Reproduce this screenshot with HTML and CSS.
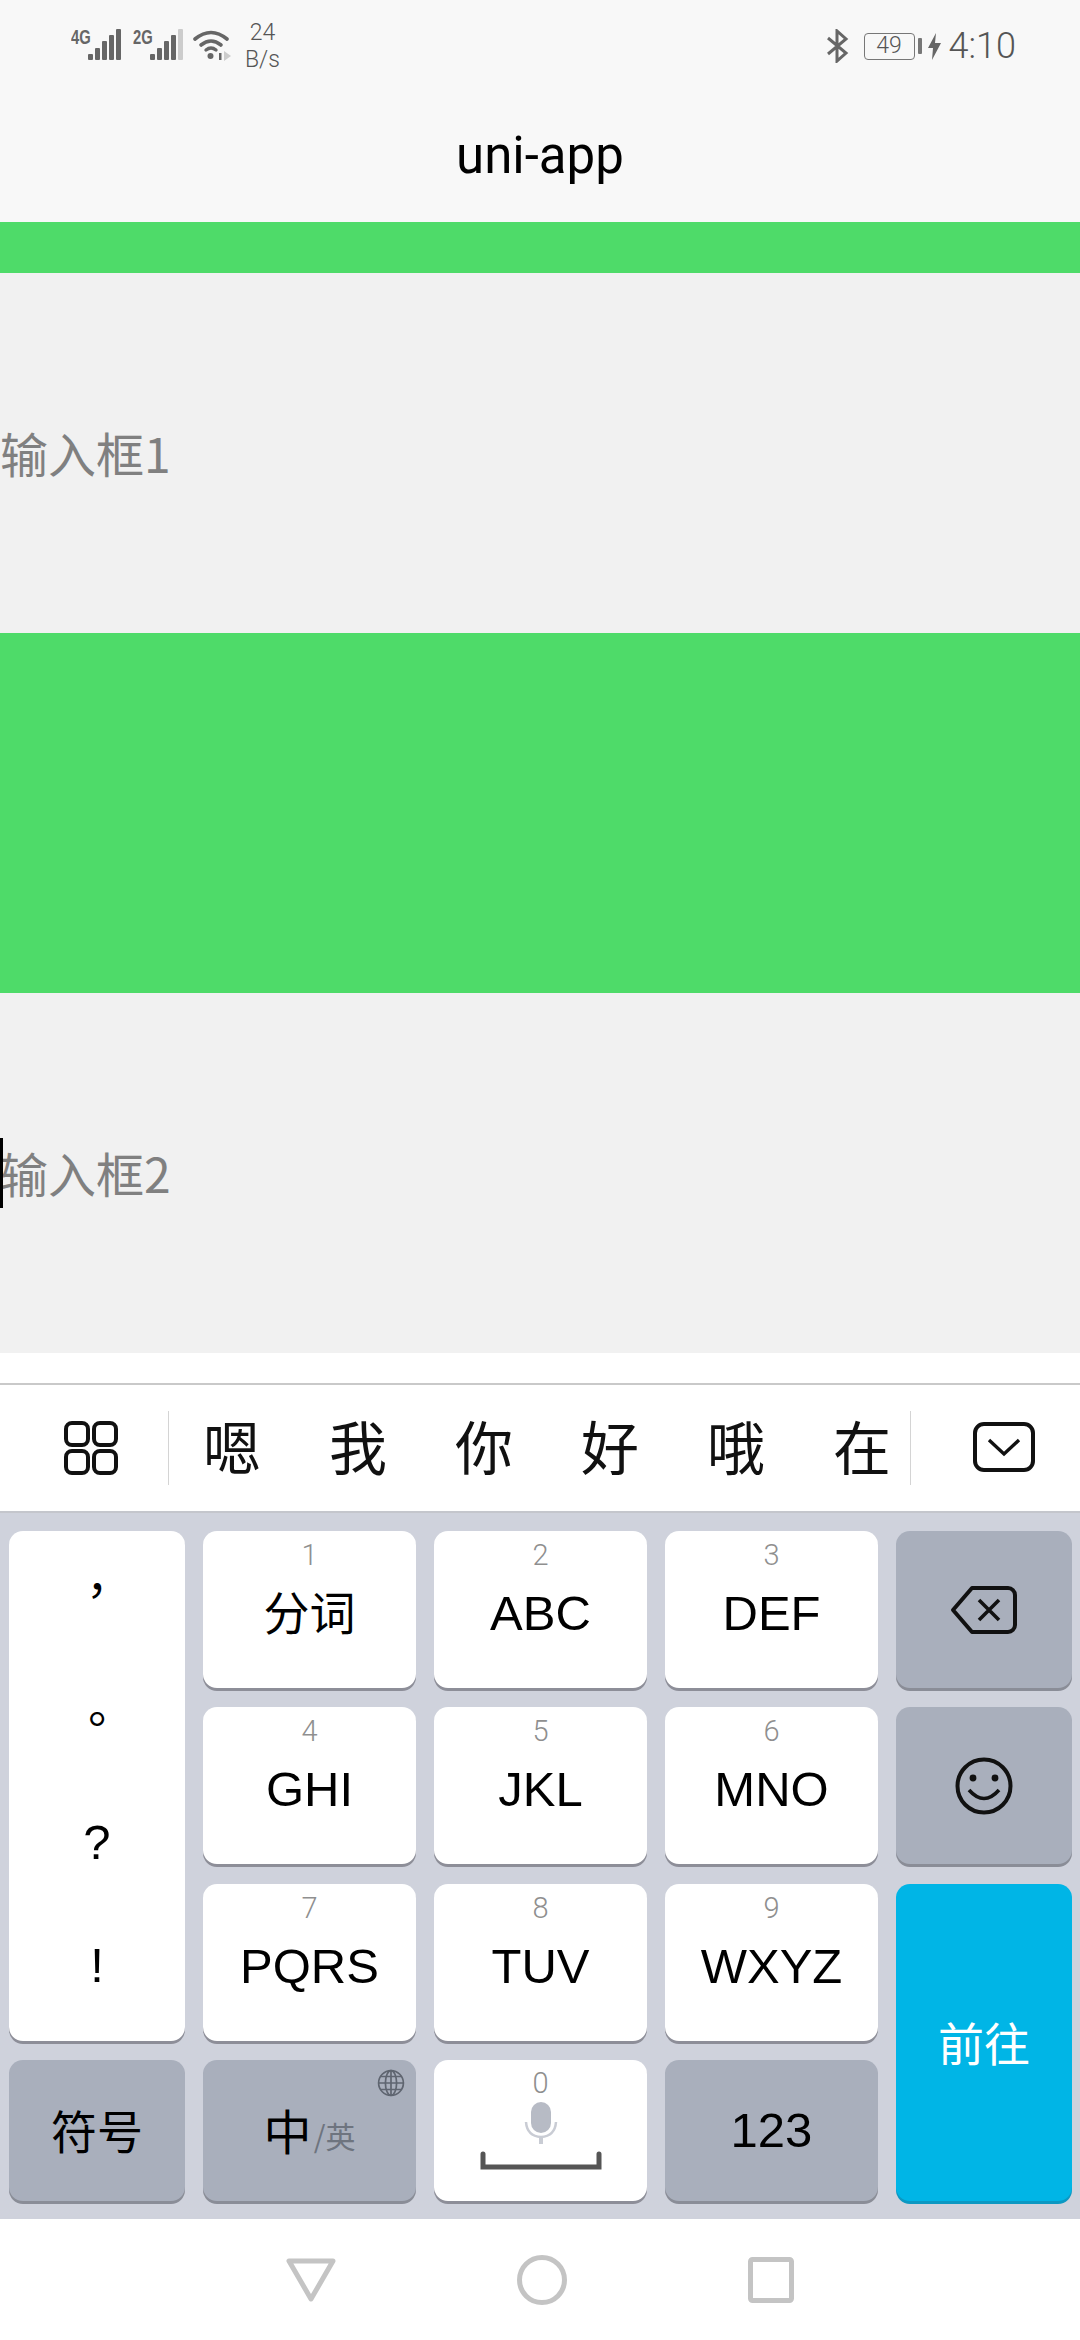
FILE: index.html
```html
<!DOCTYPE html>
<html lang="zh-CN">
<head>
<meta charset="utf-8">
<title>uni-app</title>
<link rel="stylesheet" href="styles.css">
</head>
<body>
<div class="phone">
  <header class="top">
    <div class="status">
      <div class="status-left">
        <span class="net">4G</span>
        <svg class="bars" width="34" height="32" viewBox="0 0 34 32"><g fill="#666"><rect x="0" y="25" width="5" height="6" rx="1"/><rect x="7" y="19" width="5" height="12" rx="1"/><rect x="14" y="12" width="5" height="19" rx="1"/><rect x="21" y="6" width="5" height="25" rx="1"/><rect x="28" y="0" width="5" height="31" rx="1"/></g></svg>
        <span class="net net-two">2G</span>
        <svg class="bars" width="34" height="32" viewBox="0 0 34 32"><g fill="#666"><rect x="0" y="25" width="5" height="6" rx="1"/><rect x="7" y="19" width="5" height="12" rx="1"/><rect x="14" y="12" width="5" height="19" rx="1"/><rect x="21" y="6" width="5" height="25" rx="1"/></g><rect x="28" y="0" width="5" height="31" rx="1" fill="#ccc"/></svg>
        <svg class="wifi" width="38" height="32" viewBox="0 0 38 32"><g fill="none" stroke="#666" stroke-width="3.6" stroke-linecap="round"><path d="M2 10 Q18 -3 34 10"/><path d="M8 16 Q18 8 28 16"/></g><path d="M13 21 Q18 17 23 21" fill="none" stroke="#666" stroke-width="3.4" stroke-linecap="round"/><circle cx="17.5" cy="27" r="3" fill="#666"/><rect x="26" y="24" width="2.5" height="7" fill="#666"/><path d="M31 22 L38 27 L31 32 Z" fill="#ccc"/></svg>
        <div class="speed"><span>24</span><span>B/s</span></div>
      </div>
      <div class="status-right">
        <svg class="bt" width="24" height="34" viewBox="0 0 24 34"><path d="M2 9 L20 24 L11 32 V2 L20 10 L2 25" fill="none" stroke="#666" stroke-width="3"/></svg>
        <div class="battery"><span class="battery-box">49</span><span class="battery-nub"></span></div>
        <svg class="bolt" width="13" height="27" viewBox="0 0 13 27"><path d="M8 0 L0 15 H5 L4 27 L13 10 H7 Z" fill="#666"/></svg>
        <span class="clock">4:10</span>
      </div>
    </div>
    <div class="title">uni-app</div>
  </header>

  <main class="content">
    <div class="green green-thin"></div>
    <div class="field"><span class="placeholder">输入框1</span></div>
    <div class="green green-tall"></div>
    <div class="field field-focused"><span class="caret"></span><span class="placeholder">输入框2</span></div>
    <div class="gap-strip"></div>
  </main>

  <section class="candidates">
    <div class="cand-icon">
      <svg width="54" height="54" viewBox="0 0 54 54"><g fill="none" stroke="#111" stroke-width="4"><rect x="2" y="2" width="22" height="22" rx="6"/><rect x="30" y="2" width="22" height="22" rx="6"/><rect x="2" y="30" width="22" height="22" rx="6"/><rect x="30" y="30" width="22" height="22" rx="6"/></g></svg>
    </div>
    <div class="cand-list">
      <span>嗯</span><span>我</span><span>你</span><span>好</span><span>哦</span><span>在</span>
    </div>
    <div class="cand-close">
      <svg width="62" height="50" viewBox="0 0 62 50"><rect x="2" y="2" width="58" height="46" rx="9" fill="none" stroke="#111" stroke-width="4"/><path d="M16 18 L31 32 L46 18" fill="none" stroke="#111" stroke-width="3.4"/></svg>
    </div>
  </section>

  <section class="keyboard">
    <div class="key key-punct"><span class="pc pc-comma">，</span><span class="pc">。</span><span class="pl">?</span><span class="pl">!</span></div>

    <div class="key"><span class="hint">1</span><span class="label label-cjk">分词</span></div>
    <div class="key"><span class="hint">2</span><span class="label">ABC</span></div>
    <div class="key"><span class="hint">3</span><span class="label">DEF</span></div>
    <div class="key key-func key-center">
      <svg width="68" height="50" viewBox="0 0 68 50"><path d="M22 3 H58 a7 7 0 0 1 7 7 V40 a7 7 0 0 1 -7 7 H22 L3 25 Z" fill="none" stroke="#111" stroke-width="4" stroke-linejoin="round"/><path d="M29 15 L49 35 M49 15 L29 35" stroke="#111" stroke-width="3.6"/></svg>
    </div>

    <div class="key"><span class="hint">4</span><span class="label">GHI</span></div>
    <div class="key"><span class="hint">5</span><span class="label">JKL</span></div>
    <div class="key"><span class="hint">6</span><span class="label">MNO</span></div>
    <div class="key key-func key-center">
      <svg width="58" height="58" viewBox="0 0 58 58"><circle cx="29" cy="29" r="26.5" fill="none" stroke="#111" stroke-width="4"/><circle cx="18" cy="21" r="3.4" fill="#111"/><circle cx="40" cy="21" r="3.4" fill="#111"/><path d="M14 33 Q29 50 44 33" fill="none" stroke="#111" stroke-width="3.6"/></svg>
    </div>

    <div class="key"><span class="hint">7</span><span class="label">PQRS</span></div>
    <div class="key"><span class="hint">8</span><span class="label">TUV</span></div>
    <div class="key"><span class="hint">9</span><span class="label">WXYZ</span></div>
    <div class="key key-go key-center"><span class="label-cjk">前往</span></div>

    <div class="key key-func key-center"><span class="label-cjk">符号</span></div>
    <div class="key key-func key-center key-lang">
      <svg class="globe" width="28" height="28" viewBox="0 0 28 28"><g fill="none" stroke="#5f6570" stroke-width="1.7"><circle cx="14" cy="14" r="12.4"/><ellipse cx="14" cy="14" rx="5.6" ry="12.4"/><path d="M14 1.6 V26.4 M1.6 14 H26.4 M3.6 7.5 H24.4 M3.6 20.5 H24.4"/></g></svg>
      <span class="lang"><span class="lang-main">中</span><span class="lang-sub">/英</span></span>
    </div>
    <div class="key key-space">
      <span class="hint">0</span>
      <svg width="122" height="72" viewBox="0 0 122 72"><rect x="51" y="2" width="20" height="31" rx="10" fill="#b7bbc5"/><path d="M46 22 Q47 36 61 37 Q75 36 76 22" fill="none" stroke="#c9ccd4" stroke-width="2.5"/><rect x="59" y="36" width="4" height="8" fill="#c9ccd4"/><path d="M3 54 V67 H119 V54" fill="none" stroke="#555" stroke-width="5" stroke-linecap="round"/></svg>
    </div>
    <div class="key key-func key-center"><span class="label">123</span></div>
  </section>

  <nav class="softkeys">
    <svg width="50" height="44" viewBox="0 0 50 44"><path d="M3 3 H47 L25 41 Z" fill="none" stroke="#c4c4c4" stroke-width="5" stroke-linejoin="round"/></svg>
    <svg width="50" height="50" viewBox="0 0 50 50"><circle cx="25" cy="25" r="22.5" fill="none" stroke="#c4c4c4" stroke-width="5"/></svg>
    <svg width="46" height="46" viewBox="0 0 46 46"><rect x="2.5" y="2.5" width="41" height="41" rx="2" fill="none" stroke="#c4c4c4" stroke-width="5"/></svg>
  </nav>
</div>
</body>
</html>
```

FILE: styles.css
```css
* { box-sizing: border-box; }
html, body { margin: 0; padding: 0; }
body { background: #fff; font-family: "Liberation Sans", "Noto Sans CJK SC", sans-serif; }
.phone { width: 1080px; height: 2340px; display: flex; flex-direction: column; overflow: hidden; }

.top { height: 222px; background: #f8f8f8; display: flex; flex-direction: column; }
.status { height: 90px; display: flex; justify-content: space-between; align-items: flex-start; padding: 0 64px 0 71px; color: #666; }
.status-left { display: flex; align-items: flex-start; padding-top: 29px; }
.net { display: inline-block; font-family: "Liberation Sans Narrow", "Liberation Sans", sans-serif; font-weight: 700; font-size: 20px; line-height: 16px; width: 17px; color: #666; white-space: nowrap; transform: scaleX(.74); transform-origin: left top; }
.net-two { margin-left: 11px; }
.bars { display: block; }
.wifi { margin-left: 9px; }
.speed { display: flex; flex-direction: column; align-items: center; margin-left: 14px; margin-top: -10px; font-family: Roboto, sans-serif; font-size: 23px; line-height: 27px; font-weight: 300; color: #555; }
.status-right { display: flex; align-items: center; padding-top: 28px; }
.battery { display: flex; align-items: center; margin-left: 14px; }
.battery-box { width: 51px; height: 27px; border: 1.5px solid #777; border-radius: 4px; font-family: Roboto, sans-serif; font-size: 23px; font-weight: 300; line-height: 24px; text-align: center; color: #555; }
.battery-nub { width: 4px; height: 16px; margin-left: 3px; background: #777; border-radius: 1px; }
.bolt { margin-left: 6px; }
.clock { margin-left: 8px; font-family: Roboto, sans-serif; font-size: 36px; line-height: 36px; font-weight: 300; color: #555; }
.title { flex: 1; display: flex; align-items: center; justify-content: center; font-family: Roboto, sans-serif; font-size: 51px; color: #000; padding-bottom: 2px; }

.content { display: flex; flex-direction: column; }
.green { background: #4edb69; }
.green-thin { height: 51px; }
.green-tall { height: 360px; }
.field { height: 360px; background: #f1f1f1; display: flex; align-items: center; padding-bottom: 2px; position: relative; }
.placeholder { font-family: "Noto Sans CJK SC", sans-serif; font-size: 48px; line-height: 60px; color: #808080; }
.caret { position: absolute; left: 0; top: 145px; width: 3px; height: 70px; background: #000; }
.gap-strip { height: 30px; background: #fff; }

.candidates { height: 130px; background: #fff; border-top: 2px solid #c9c9c9; border-bottom: 2px solid #c4c6cc; display: flex; align-items: center; }
.cand-icon { width: 169px; height: 74px; padding-left: 64px; padding-top: 10px; border-right: 1px solid #d4d4d4; }
.cand-icon svg, .cand-close svg { display: block; }
.cand-list { width: 741px; display: flex; gap: 68px; padding: 0 0 6px 34px; font-family: "Noto Sans CJK SC", sans-serif; font-size: 58px; line-height: 74px; color: #111; }
.cand-close { height: 74px; flex: 1; border-left: 1px solid #d4d4d4; padding-left: 62px; padding-top: 11px; }

.keyboard { height: 706px; background: #cfd2dc; padding: 18px 0 0 9px; display: grid; grid-template-columns: 176px 213px 213px 213px 176px; grid-template-rows: 157px 157px 157px 141px; gap: 19.3px 18px; align-content: start; }
.key { background: #fff; border-radius: 14px; box-shadow: 0 3px 0 #8d8e98; display: flex; flex-direction: column; align-items: center; padding-top: 9px; color: #000; }
.hint { font-family: Roboto, sans-serif; font-weight: 300; font-size: 29px; line-height: 30px; color: #8f8f8f; }
.label { font-size: 49px; line-height: 56px; margin-top: 15px; }
.label-cjk { font-family: "Noto Sans CJK SC", sans-serif; font-size: 46px; line-height: 56px; padding-bottom: 3px; }
.key > .label-cjk { margin-top: 12px; }
.key-center { justify-content: center; padding-top: 0; }
.key-center > .label, .key-center > .label-cjk { margin-top: 0; }
.key-func { background: #a9afbc; box-shadow: 0 3px 0 #8a8d97; }
.key-go { grid-row: span 2; background: #00b5e6; box-shadow: 0 3px 0 #0c98c2; color: #fff; }
.key-punct { grid-row: span 3; padding: 0 0 16px; justify-content: flex-start; }
.pc, .pl { height: 128px; display: flex; align-items: center; justify-content: center; line-height: 1; }
.pc { font-family: "Noto Sans CJK TC", sans-serif; font-size: 46px; }
.pc-comma { padding-bottom: 12px; }
.pl { font-size: 49px; padding-top: 6px; }
.key-lang { position: relative; }
.globe { position: absolute; top: 9px; right: 11px; }
.lang { display: flex; align-items: flex-end; font-family: "Noto Sans CJK SC", sans-serif; padding-bottom: 3px; }
.lang-main { font-size: 48px; line-height: 56px; color: #000; }
.lang-sub { font-size: 30px; line-height: 44px; color: #6e747f; margin-left: 2px; }
.key-space { padding-top: 8px; gap: 2px; }
.key-space svg { display: block; }

.softkeys { flex: 1; background: #fff; display: flex; align-items: center; justify-content: center; gap: 181px; }
```
